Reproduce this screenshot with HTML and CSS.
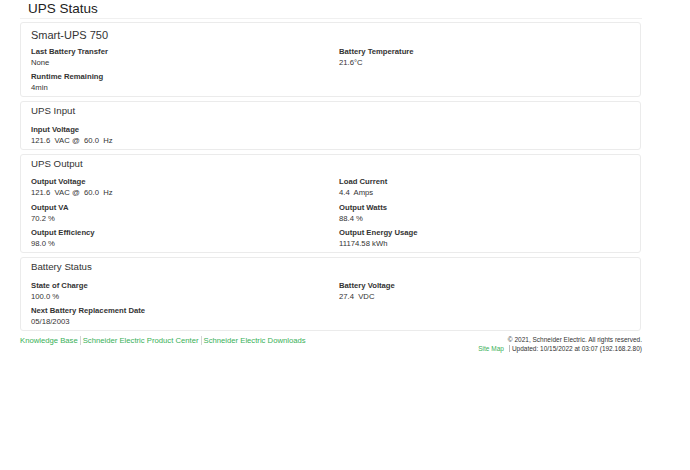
FILE: index.html
```html
<!DOCTYPE html>
<html>
<head>
<meta charset="utf-8">
<title>UPS Status</title>
<link rel="stylesheet" href="styles.css">
</head>
<body>
<div class="page">
  <h1 class="page-title">UPS Status</h1>

  <section class="card card-main">
    <h2 class="card-title card-title-main">Smart-UPS 750</h2>
    <div class="fields">
      <div class="field"><div class="label">Last Battery Transfer</div><div class="value">None</div></div>
      <div class="field"><div class="label">Battery Temperature</div><div class="value">21.6°C</div></div>
      <div class="field"><div class="label">Runtime Remaining</div><div class="value">4min</div></div>
    </div>
  </section>

  <section class="card">
    <h3 class="card-title">UPS Input</h3>
    <div class="fields">
      <div class="field"><div class="label">Input Voltage</div><div class="value">121.6&nbsp; VAC @ &nbsp;60.0&nbsp; Hz</div></div>
    </div>
  </section>

  <section class="card">
    <h3 class="card-title">UPS Output</h3>
    <div class="fields">
      <div class="field"><div class="label">Output Voltage</div><div class="value">121.6&nbsp; VAC @ &nbsp;60.0&nbsp; Hz</div></div>
      <div class="field"><div class="label">Load Current</div><div class="value">4.4&nbsp; Amps</div></div>
      <div class="field"><div class="label">Output VA</div><div class="value">70.2 %</div></div>
      <div class="field"><div class="label">Output Watts</div><div class="value">88.4 %</div></div>
      <div class="field"><div class="label">Output Efficiency</div><div class="value">98.0 %</div></div>
      <div class="field"><div class="label">Output Energy Usage</div><div class="value">11174.58 kWh</div></div>
    </div>
  </section>

  <section class="card">
    <h3 class="card-title">Battery Status</h3>
    <div class="fields">
      <div class="field"><div class="label">State of Charge</div><div class="value">100.0 %</div></div>
      <div class="field"><div class="label">Battery Voltage</div><div class="value">27.4&nbsp; VDC</div></div>
      <div class="field"><div class="label">Next Battery Replacement Date</div><div class="value">05/18/2003</div></div>
    </div>
  </section>

  <footer class="footer">
    <nav class="footer-links">
      <a href="#">Knowledge Base</a><span class="sep"></span><a href="#">Schneider Electric Product Center</a><span class="sep"></span><a href="#">Schneider Electric Downloads</a>
    </nav>
    <div class="footer-info">
      <div>© 2021, Schneider Electric. All rights reserved.</div>
      <div><a href="#" class="sitemap">Site Map</a><span class="updated">Updated: 10/15/2022 at 03:07 (192.168.2.80)</span></div>
    </div>
  </footer>
</div>
</body>
</html>
```

FILE: styles.css
```css
html, body {
  margin: 0;
  padding: 0;
  background: #ffffff;
}

body {
  font-family: "Liberation Sans", Arial, Helvetica, sans-serif;
  color: #333333;
  font-size: 7.7px;
  line-height: 11px;
}

.page {
  width: 622px;
  margin-left: 20px;
}

.page-title {
  margin: 0;
  padding: 1px 0 1px 8px;
  font-size: 13.5px;
  line-height: 16px;
  font-weight: normal;
  color: #222222;
  border-bottom: 1px solid #f0f0f0;
}

.card {
  margin-top: 4px;
  border: 1px solid #ebebeb;
  border-radius: 3px;
  padding: 0 10px 3px 10px;
  width: 599px;
}

.card-main {
  margin-top: 3px;
}

.card-title {
  margin: 3px 0 6.5px 0;
  font-size: 9.7px;
  line-height: 12px;
  font-weight: normal;
  color: #333333;
}

.card-title-main {
  margin: 6px 0 3.5px 0;
  font-size: 11px;
  line-height: 13px;
}

.fields {
  display: grid;
  grid-template-columns: 308px 1fr;
  row-gap: 3.5px;
}

.label {
  font-weight: bold;
  color: #333333;
}

.value {
  color: #333333;
}

.footer {
  display: flex;
  justify-content: space-between;
  align-items: flex-start;
  margin-top: 4px;
}

.footer a {
  color: #38b057;
  text-decoration: none;
}

.footer-links {
  display: flex;
  align-items: center;
  font-size: 7.7px;
  line-height: 11px;
}

.sep {
  display: inline-block;
  width: 1px;
  height: 9px;
  background: #d4d4d4;
  margin: 0 2px;
}

.footer-info {
  text-align: right;
  font-size: 6.5px;
  line-height: 9px;
  color: #333333;
}

.sitemap {
  margin-right: 5px;
}

.updated {
  border-left: 1px solid #bbbbbb;
  padding-left: 2px;
}
```
